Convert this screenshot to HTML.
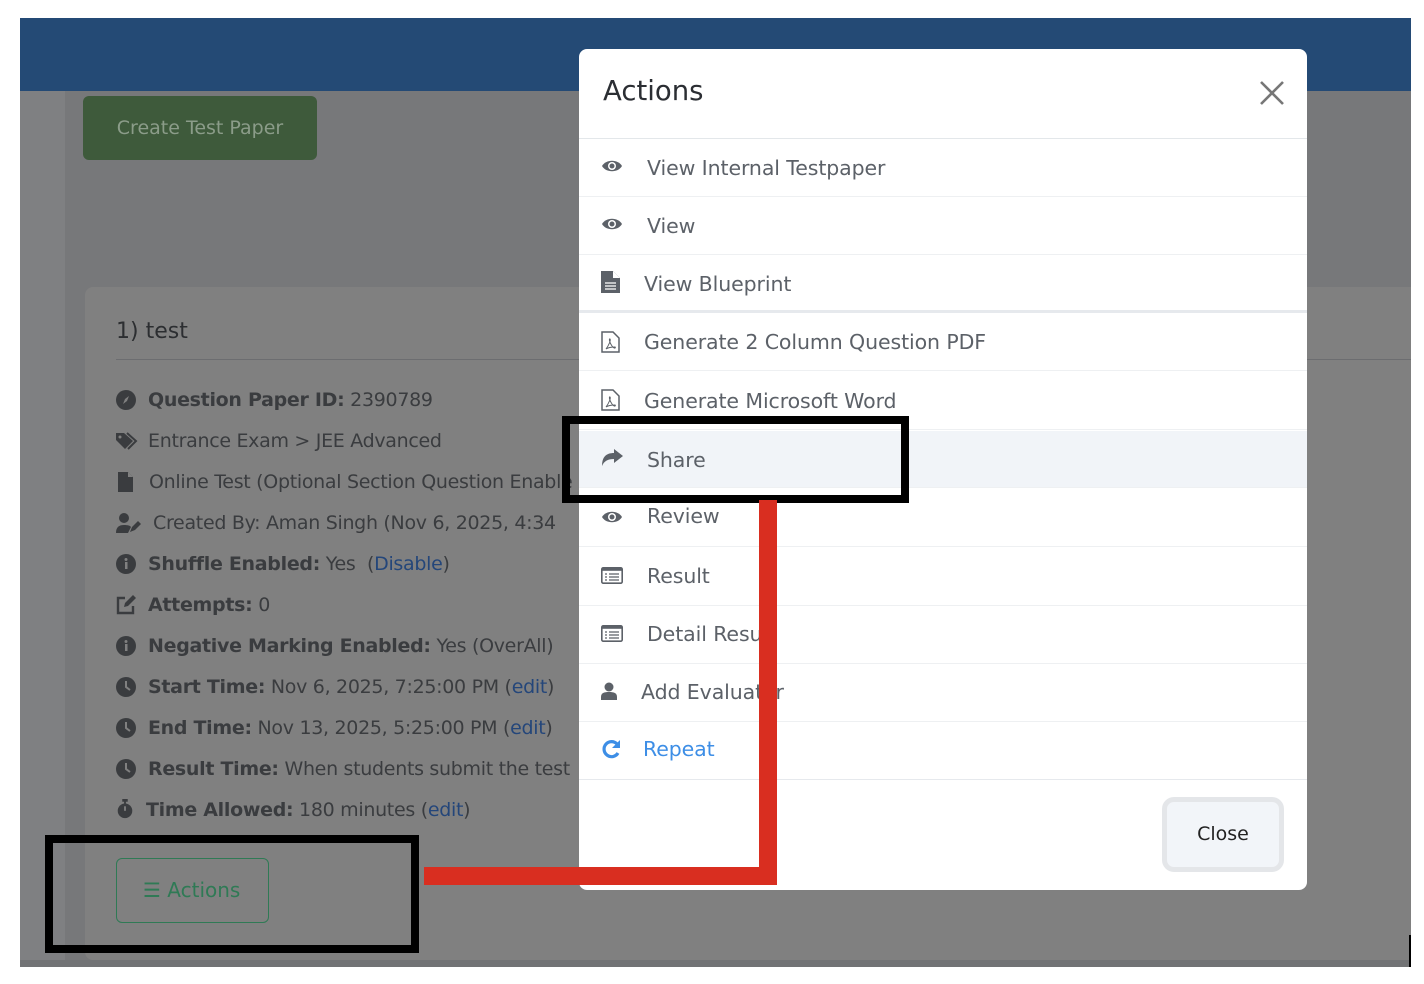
<!DOCTYPE html>
<html><head><meta charset="utf-8"><style>
*{margin:0;padding:0;box-sizing:border-box}
body{width:1424px;height:984px;background:#fff;position:relative;overflow:hidden;font-family:"DejaVu Sans","Liberation Sans",sans-serif}
.abs{position:absolute}
.t{position:absolute;left:148px;font-size:19px;color:#3a3c3f;white-space:nowrap;letter-spacing:-0.3px}
.t b{font-weight:bold}
.t a{color:#24467a;text-decoration:none}
.ic{position:absolute;left:116px;width:20px;height:20px}
.row{position:absolute;left:579px;width:728px;height:58px;border-bottom:1px solid #eef0f2}
.row span{position:absolute;top:17px;font-size:20.5px;color:#5c6168;white-space:nowrap;letter-spacing:-0.1px}
.row svg{position:absolute;left:22px;top:19px}
</style></head><body>
<div class="abs" style="left:20px;top:18px;width:1391px;height:949px;background:#7e7f81"></div>
<div class="abs" style="left:20px;top:18px;width:1391px;height:73px;background:#244a75"></div>
<div class="abs" style="left:65px;top:91px;width:1346px;height:869px;background:#77787a"></div>
<div class="abs" style="left:20px;top:91px;width:45px;height:876px;background:#7f8082"></div>
<div class="abs" style="left:85px;top:287px;width:1326px;height:673px;background:#808080;border-radius:8px 0 0 8px"></div>
<div class="abs" style="left:20px;top:960px;width:1391px;height:7px;background:#727375"></div>
<div class="abs" style="left:1409px;top:935px;width:2px;height:32px;background:#000"></div>
<div class="abs" style="left:83px;top:96px;width:234px;height:64px;background:#3e5a3b;border-radius:6px;color:#8b9c89;font-size:19px;line-height:64px;text-align:center">Create Test Paper</div>
<div class="abs" style="left:116px;top:319px;font-size:22px;color:#2c2e31">1) test</div>
<div class="abs" style="left:116px;top:359px;width:1295px;height:1px;background:#6c6d70"></div>

<svg class="ic" style="top:390px" viewBox="0 0 20 20"><circle cx="10" cy="10" r="10" fill="#3a3c3f"/><path d="M13 6 L11 11 L7 14 L9 9Z" fill="#808080"/></svg>
<div class="t" style="top:389px"><b>Question Paper ID:</b> 2390789</div>
<svg class="ic" style="top:431px;width:22px" viewBox="0 0 22 20"><path d="M0 2h8l9 8-8 8-9-9z" fill="#3a3c3f"/><path d="M11 2l9 8-8 8" stroke="#3a3c3f" stroke-width="2" fill="none"/><circle cx="4" cy="6" r="1.5" fill="#808080"/></svg>
<div class="t" style="top:430px">Entrance Exam &gt; JEE Advanced</div>
<svg class="ic" style="top:472px" viewBox="0 0 20 20"><path d="M2 0h10l5 5v15H2z" fill="#3a3c3f"/><path d="M12 0v5h5" fill="#808080"/></svg>
<div class="t" style="top:471px;left:149px">Online Test (Optional Section Question Enable</div>
<svg class="ic" style="top:513px;width:26px" viewBox="0 0 26 20"><circle cx="8" cy="5" r="5" fill="#3a3c3f"/><path d="M0 20c0-6 3-8 8-8s6 1 7 2l-3 6z" fill="#3a3c3f"/><path d="M14 19l2-5 6-6 3 3-6 6z" fill="#3a3c3f"/></svg>
<div class="t" style="top:512px;left:153px">Created By: Aman Singh (Nov 6, 2025, 4:34</div>
<svg class="ic" style="top:554px" viewBox="0 0 20 20"><circle cx="10" cy="10" r="10" fill="#3a3c3f"/><rect x="9" y="8" width="2.5" height="7" fill="#808080"/><circle cx="10" cy="5.5" r="1.5" fill="#808080"/></svg>
<div class="t" style="top:553px"><b>Shuffle Enabled:</b> Yes &nbsp;(<a>Disable</a>)</div>
<svg class="ic" style="top:595px" viewBox="0 0 20 20"><path d="M9 3H2v15h15v-7" stroke="#3a3c3f" stroke-width="2.4" fill="none"/><path d="M8 12l1-4 8-8 3 3-8 8z" fill="#3a3c3f"/></svg>
<div class="t" style="top:594px"><b>Attempts:</b> 0</div>
<svg class="ic" style="top:636px" viewBox="0 0 20 20"><circle cx="10" cy="10" r="10" fill="#3a3c3f"/><rect x="9" y="8" width="2.5" height="7" fill="#808080"/><circle cx="10" cy="5.5" r="1.5" fill="#808080"/></svg>
<div class="t" style="top:635px"><b>Negative Marking Enabled:</b> Yes (OverAll)</div>
<svg class="ic" style="top:677px" viewBox="0 0 20 20"><circle cx="10" cy="10" r="10" fill="#3a3c3f"/><path d="M10 4v6l4 3" stroke="#808080" stroke-width="2" fill="none"/></svg>
<div class="t" style="top:676px"><b>Start Time:</b> Nov 6, 2025, 7:25:00 PM (<a>edit</a>)</div>
<svg class="ic" style="top:718px" viewBox="0 0 20 20"><circle cx="10" cy="10" r="10" fill="#3a3c3f"/><path d="M10 4v6l4 3" stroke="#808080" stroke-width="2" fill="none"/></svg>
<div class="t" style="top:717px"><b>End Time:</b> Nov 13, 2025, 5:25:00 PM (<a>edit</a>)</div>
<svg class="ic" style="top:759px" viewBox="0 0 20 20"><circle cx="10" cy="10" r="10" fill="#3a3c3f"/><path d="M10 4v6l4 3" stroke="#808080" stroke-width="2" fill="none"/></svg>
<div class="t" style="top:758px"><b>Result Time:</b> When students submit the test</div>
<svg class="ic" style="top:799px;width:18px" viewBox="0 0 18 22"><circle cx="9" cy="13" r="8" fill="#3a3c3f"/><rect x="6" y="0" width="6" height="3" fill="#3a3c3f"/><rect x="8" y="2" width="2" height="4" fill="#3a3c3f"/><rect x="8" y="8" width="2" height="5" fill="#808080"/></svg>
<div class="t" style="top:799px;left:146px"><b>Time Allowed:</b> 180 minutes (<a>edit</a>)</div>

<div class="abs" style="left:116px;top:858px;width:153px;height:65px;border:1.5px solid #2f7a55;border-radius:6px;color:#2f7a55;font-size:20px;line-height:62px;padding-left:26px"><span style="font-size:20px">&#9776;</span> Actions</div>

<div class="abs" style="left:579px;top:49px;width:728px;height:841px;background:#fff;border-radius:8px"></div>
<div class="abs" style="left:603px;top:75px;font-size:27.5px;color:#2b2e33">Actions</div>
<svg class="abs" style="left:1259px;top:80px" width="26" height="26" viewBox="0 0 26 26"><path d="M2 2L24 24M24 2L2 24" stroke="#777" stroke-width="2.6"/></svg>
<div class="abs" style="left:579px;top:138px;width:728px;height:1px;background:#e3e7ea"></div>

<div class="row" style="top:139px"><svg width="22" height="16" viewBox="0 0 22 16"><path d="M1 8C5 1 17 1 21 8 17 15 5 15 1 8z" fill="#5c6168"/><circle cx="11" cy="8" r="4" fill="#fff"/><circle cx="11" cy="8" r="2.5" fill="#5c6168"/></svg><span style="left:68px">View Internal Testpaper</span></div>
<div class="row" style="top:197px"><svg width="22" height="16" viewBox="0 0 22 16"><path d="M1 8C5 1 17 1 21 8 17 15 5 15 1 8z" fill="#5c6168"/><circle cx="11" cy="8" r="4" fill="#fff"/><circle cx="11" cy="8" r="2.5" fill="#5c6168"/></svg><span style="left:68px">View</span></div>
<div class="row" style="top:255px;border-bottom:3px solid #e6e9ed"><svg width="19" height="22" viewBox="0 0 19 22" style="top:16px"><path d="M0 0h12l7 7v15H0z" fill="#5c6168"/><path d="M12 0v7h7" fill="#fff"/><path d="M4 12h11M4 15h11M4 18h11" stroke="#fff" stroke-width="1.3"/></svg><span style="left:65px">View Blueprint</span></div>
<div class="row" style="top:313px"><svg width="19" height="22" viewBox="0 0 19 22" style="top:18px"><path d="M1 1h11l6 6v14H1z" stroke="#5c6168" stroke-width="1.5" fill="none"/><path d="M5 18c3-4 5-9 4-10s-1 3 2 7 4 1 3 1-6 0-9 2" stroke="#5c6168" stroke-width="1" fill="none"/></svg><span style="left:65px">Generate 2 Column Question PDF</span></div>
<div class="row" style="top:372px"><svg width="19" height="22" viewBox="0 0 19 22" style="top:17px"><path d="M1 1h11l6 6v14H1z" stroke="#5c6168" stroke-width="1.5" fill="none"/><path d="M5 18c3-4 5-9 4-10s-1 3 2 7 4 1 3 1-6 0-9 2" stroke="#5c6168" stroke-width="1" fill="none"/></svg><span style="left:65px">Generate Microsoft Word</span></div>
<div class="row" style="top:431px;background:#f1f4f8;height:57px"><svg width="22" height="18" viewBox="0 0 22 18" style="top:18px"><path d="M22 7L13 0v4C5 4 1 8 1 17c2-5 6-7 12-7v4z" fill="#5c6168"/></svg><span style="left:68px">Share</span></div>
<div class="row" style="top:489px"><svg width="22" height="16" viewBox="0 0 22 16" style="top:20px"><path d="M1 8C5 1 17 1 21 8 17 15 5 15 1 8z" fill="#5c6168"/><circle cx="11" cy="8" r="4" fill="#fff"/><circle cx="11" cy="8" r="2.5" fill="#5c6168"/></svg><span style="left:68px;top:15px">Review</span></div>
<div class="row" style="top:548px"><svg width="22" height="17" viewBox="0 0 22 17" style="top:19px"><rect x="0.8" y="0.8" width="20.4" height="15.4" rx="1.5" stroke="#5c6168" stroke-width="1.6" fill="#fff"/><rect x="0.8" y="0.8" width="20.4" height="3" fill="#5c6168"/><path d="M4 7h2M4 10h2M4 13h2M8 7h10M8 10h10M8 13h10" stroke="#5c6168" stroke-width="1.3"/></svg><span style="left:68px;top:16px">Result</span></div>
<div class="row" style="top:606px"><svg width="22" height="17" viewBox="0 0 22 17" style="top:19px"><rect x="0.8" y="0.8" width="20.4" height="15.4" rx="1.5" stroke="#5c6168" stroke-width="1.6" fill="#fff"/><rect x="0.8" y="0.8" width="20.4" height="3" fill="#5c6168"/><path d="M4 7h2M4 10h2M4 13h2M8 7h10M8 10h10M8 13h10" stroke="#5c6168" stroke-width="1.3"/></svg><span style="left:68px;top:16px">Detail Result</span></div>
<div class="row" style="top:664px"><svg width="16" height="18" viewBox="0 0 16 18" style="top:18px"><circle cx="8" cy="5" r="4.5" fill="#5c6168"/><path d="M0 18v-3c0-4 3-5 8-5s8 1 8 5v3z" fill="#5c6168"/></svg><span style="left:62px;top:16px">Add Evaluator</span></div>
<div class="row" style="top:722px;border-bottom:1px solid #e6e9ed"><svg width="20" height="20" viewBox="0 0 20 20" style="top:17px"><path d="M16 5A7.5 7.5 0 1 0 17 14" stroke="#3d8ee6" stroke-width="3.2" fill="none"/><path d="M19 1v8h-8z" fill="#3d8ee6"/></svg><span style="left:64px;top:15px;color:#3d8ee6">Repeat</span></div>

<div class="abs" style="left:1162px;top:797px;width:122px;height:75px;background:#f2f5f9;border:5px solid #e4e6e9;border-radius:12px;font-size:19px;color:#222;text-align:center;line-height:65px">Close</div>

<div class="abs" style="left:562px;top:416px;width:347px;height:87px;border:8px solid #000"></div>
<div class="abs" style="left:45px;top:835px;width:374px;height:118px;border:8px solid #000"></div>
<div class="abs" style="left:424px;top:867px;width:353px;height:18px;background:#d92e20"></div>
<div class="abs" style="left:759px;top:500px;width:18px;height:385px;background:#d92e20"></div>
</body></html>
